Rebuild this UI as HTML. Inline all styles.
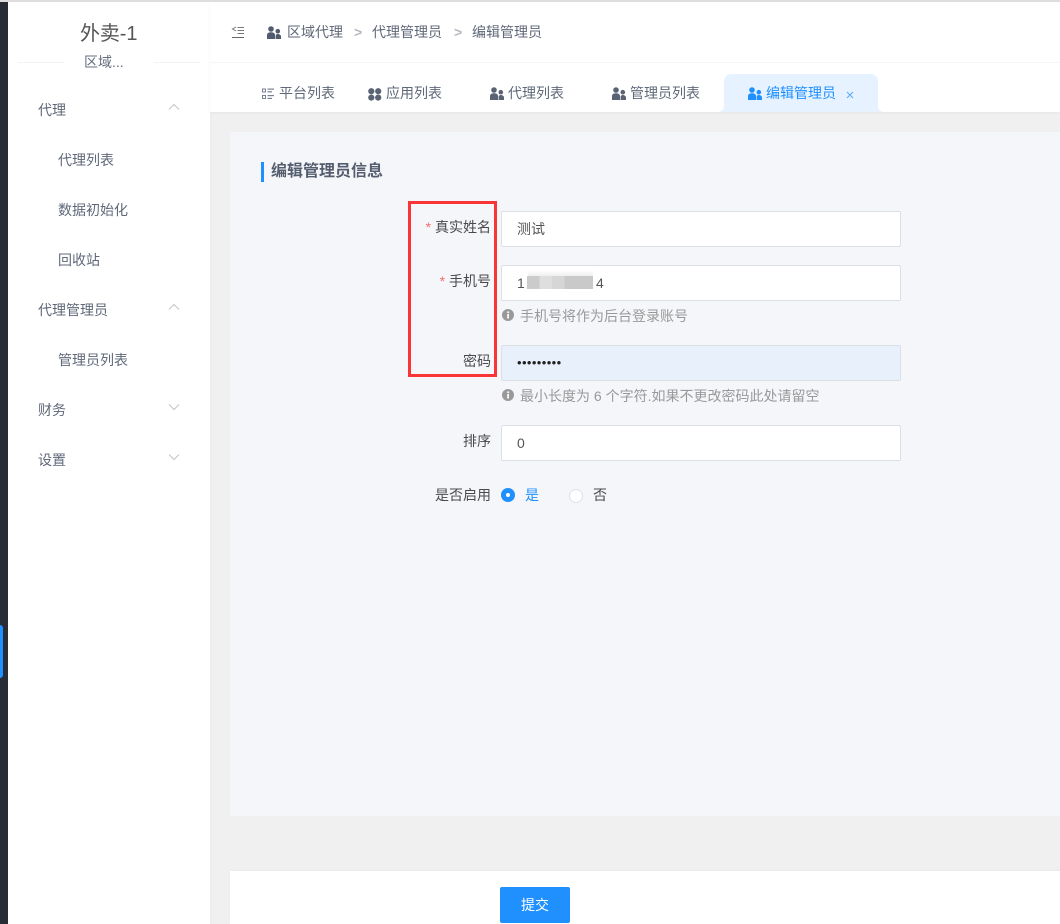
<!DOCTYPE html>
<html lang="zh">
<head>
<meta charset="utf-8">
<title>编辑管理员</title>
<style>
html,body{margin:0;padding:0;width:1060px;height:924px;overflow:hidden;background:#f0f0f0}
body{position:relative;font-family:"Liberation Sans","Noto Sans CJK SC",sans-serif;font-size:14px;color:#515a6e}
.a{position:absolute;white-space:nowrap;line-height:20px}
.box{position:absolute;box-sizing:border-box}
.m{color:#5f6879}
.input{position:absolute;left:501px;width:400px;height:36px;box-sizing:border-box;background:#fff;border:1px solid #dcdfe6;border-radius:2px;color:#555;line-height:34px;padding-left:15px}
.lab{color:#4a4a4a;text-align:right;right:569px}
.hint{color:#999;left:520px}
.star{color:#f56c6c;font-family:"Liberation Sans",sans-serif}
svg{position:absolute;display:block}
</style>
</head>
<body>
<div class="box" style="left:0;top:0;width:1060px;height:2px;background:#dedede;z-index:5"></div>
<div class="box" style="left:0;top:1px;width:8px;height:923px;background:#282c35"></div>
<div class="box" style="left:0;top:625px;width:3px;height:53px;background:#2090ff;border-radius:0 3px 3px 0"></div>

<div class="box" style="left:8px;top:1px;width:202px;height:923px;background:#fff"></div>
<div class="box" style="left:210px;top:1px;width:3px;height:923px;background:linear-gradient(90deg,#ebebeb,#f0f0f0)"></div>
<div class="box" style="left:18px;top:62px;width:46px;height:1px;background:#f3f3f3"></div>
<div class="box" style="left:154px;top:62px;width:46px;height:1px;background:#f3f3f3"></div>
<div class="a" style="left:80px;top:21px;font-size:20px;line-height:26px;color:#555;letter-spacing:-.1px">外卖-1</div>
<div class="a" style="left:84px;top:52px;color:#666f80">区域...</div>

<div class="a m" style="left:38px;top:99px;margin-top:.6px">代理</div>
<svg style="left:168px;top:103px" width="12" height="8" viewBox="0 0 12 8"><path d="M1 6.5L6 1.5L11 6.5" fill="none" stroke="#c0c4cc" stroke-width="1"/></svg>
<div class="a m" style="left:58px;top:150px">代理列表</div>
<div class="a m" style="left:58px;top:200px">数据初始化</div>
<div class="a m" style="left:58px;top:250px">回收站</div>
<div class="a m" style="left:38px;top:300px">代理管理员</div>
<svg style="left:168px;top:303px" width="12" height="8" viewBox="0 0 12 8"><path d="M1 6.5L6 1.5L11 6.5" fill="none" stroke="#c0c4cc" stroke-width="1"/></svg>
<div class="a m" style="left:58px;top:350px">管理员列表</div>
<div class="a m" style="left:38px;top:400px">财务</div>
<svg style="left:168px;top:403px" width="12" height="8" viewBox="0 0 12 8"><path d="M1 1.5L6 6.5L11 1.5" fill="none" stroke="#c0c4cc" stroke-width="1"/></svg>
<div class="a m" style="left:38px;top:450px">设置</div>
<svg style="left:168px;top:453px" width="12" height="8" viewBox="0 0 12 8"><path d="M1 1.5L6 6.5L11 1.5" fill="none" stroke="#c0c4cc" stroke-width="1"/></svg>

<div class="box" style="left:210px;top:1px;width:850px;height:111px;background:#fff;box-shadow:0 1px 3px rgba(0,0,0,.05)"></div>
<div class="box" style="left:210px;top:62px;width:850px;height:1px;background:#f5f5f5"></div>

<svg style="left:231px;top:26px" width="14" height="12" viewBox="0 0 14 12"><path d="M5 1L1.5 3L5 5M6.5 1.5H13M6.5 4.5H13M6.5 7.5H13" fill="none" stroke="#777" stroke-width="1"/><path d="M1 11.5H13" stroke="#666" stroke-width="1"/></svg>

<svg style="left:267px;top:26px" width="14" height="13" viewBox="0 0 14 13"><g fill="#515a6e"><circle cx="4" cy="3" r="2.8"/><path d="M0 13V9C0 7 2 6.2 4 6.2S8 7 8 9V13Z"/><circle cx="10.8" cy="5.2" r="2.3"/><path d="M8.6 13V10C8.6 8.8 9.6 8 10.8 8S14 8.8 14 10.5V13Z"/></g></svg>
<div class="a" style="left:287px;top:22px;color:#5f6879">区域代理</div>
<div class="a" style="left:354px;top:22px;color:#b4b8c0;font-family:'Liberation Sans',sans-serif;font-weight:700">&gt;</div>
<div class="a" style="left:372px;top:22px;color:#5f6879">代理管理员</div>
<div class="a" style="left:454px;top:22px;color:#b4b8c0;font-family:'Liberation Sans',sans-serif;font-weight:700">&gt;</div>
<div class="a" style="left:472px;top:22px;color:#5f6879">编辑管理员</div>

<svg style="left:262px;top:88px" width="12" height="12" viewBox="0 0 12 12"><g fill="#7a8291"><path d="M0 0.5H4V4.5H0ZM1 1.5V3.5H3V1.5Z" fill-rule="evenodd"/><rect x="5.5" y="0.5" width="6.5" height="1.2"/><rect x="5.5" y="3.2" width="4.5" height="1.2"/><path d="M0 7H4V11H0ZM1 8V10H3V8Z" fill-rule="evenodd"/><rect x="5.5" y="7" width="6.5" height="1.2"/><rect x="5.5" y="9.8" width="4.5" height="1.2"/></g></svg>
<div class="a m" style="left:279px;top:83px">平台列表</div>

<svg style="left:368px;top:88px" width="14" height="13" viewBox="0 0 14 13"><g fill="#5a6373"><circle cx="3.3" cy="3.2" r="3.1"/><circle cx="10.2" cy="3.2" r="3.1"/><circle cx="3.3" cy="9.6" r="3.1"/><circle cx="10.2" cy="9.6" r="3.1"/></g></svg>
<div class="a m" style="left:386px;top:83px">应用列表</div>

<svg style="left:490px;top:87px" width="14" height="13" viewBox="0 0 14 13"><g fill="#5a6373"><circle cx="4" cy="3" r="2.8"/><path d="M0 13V9C0 7 2 6.2 4 6.2S8 7 8 9V13Z"/><circle cx="10.8" cy="5.2" r="2.3"/><path d="M8.6 13V10C8.6 8.8 9.6 8 10.8 8S14 8.8 14 10.5V13Z"/></g></svg>
<div class="a m" style="left:508px;top:83px">代理列表</div>

<svg style="left:612px;top:87px" width="14" height="13" viewBox="0 0 14 13"><g fill="#5a6373"><circle cx="4" cy="3" r="2.8"/><path d="M0 13V9C0 7 2 6.2 4 6.2S8 7 8 9V13Z"/><circle cx="10.8" cy="5.2" r="2.3"/><path d="M8.6 13V10C8.6 8.8 9.6 8 10.8 8S14 8.8 14 10.5V13Z"/></g></svg>
<div class="a m" style="left:630px;top:83px">管理员列表</div>

<svg style="left:717px;top:74px;z-index:1" width="168" height="38" viewBox="0 0 168 38"><path d="M0 38C4 38 7 36 7 32V8C7 3 10 0 15 0H153C158 0 161 3 161 8V32C161 36 164 38 168 38Z" fill="#e6f2ff"/></svg>
<svg style="left:748px;top:87px;z-index:2" width="14" height="13" viewBox="0 0 14 13"><g fill="#2090ff"><circle cx="4" cy="3" r="2.8"/><path d="M0 13V9C0 7 2 6.2 4 6.2S8 7 8 9V13Z"/><circle cx="10.8" cy="5.2" r="2.3"/><path d="M8.6 13V10C8.6 8.8 9.6 8 10.8 8S14 8.8 14 10.5V13Z"/></g></svg>
<div class="a" style="left:766px;top:83px;color:#2090ff;z-index:2">编辑管理员</div>
<svg style="left:846px;top:91px;z-index:2" width="8" height="8" viewBox="0 0 8 8"><path d="M1 1L7 7M7 1L1 7" stroke="#5aa9f5" stroke-width="1"/></svg>

<div class="box" style="left:230px;top:132px;width:830px;height:684px;background:#f5f6fa"></div>
<div class="box" style="left:261px;top:162px;width:3px;height:20px;background:#2090ff"></div>
<div class="a" style="left:271px;top:161px;font-size:16px;line-height:22px;font-weight:700;color:#555e6e">编辑管理员信息</div>

<div class="box" style="left:408px;top:201px;width:89px;height:176px;border:3px solid #f93535"></div>

<div class="a lab" style="top:217px"><span class="star">* </span>真实姓名</div>
<div class="input" style="top:211px">测试</div>

<div class="a lab" style="top:271px"><span class="star">* </span>手机号</div>
<div class="input" style="top:265px">1</div>
<div class="a" style="left:596px;top:273px;color:#555">4</div>
<div class="box" style="left:528px;top:270px;width:65px;height:7px;background:linear-gradient(180deg,#fff,#ececec)"></div>
<div class="box" style="left:527px;top:276px;width:66px;height:13px;background:linear-gradient(90deg,#cbcbcb 0,#cbcbcb 19%,#dedede 19%,#dedede 38%,#d6d6d6 38%,#d6d6d6 57%,#c9c9c9 57%,#c9c9c9 100%)"></div>

<svg style="left:502px;top:309px" width="12" height="12" viewBox="0 0 12 12"><circle cx="6" cy="6" r="6" fill="#999"/><rect x="5.2" y="5" width="1.7" height="4.5" fill="#fff"/><circle cx="6.2" cy="3.3" r="1" fill="#fff"/></svg>
<div class="a hint" style="top:306px">手机号将作为后台登录账号</div>

<div class="a lab" style="top:351px">密码</div>
<div class="input" style="top:345px;background:#e8f0fb;color:#222;font-size:13px;letter-spacing:.4px">•••••••••</div>

<svg style="left:502px;top:389px" width="12" height="12" viewBox="0 0 12 12"><circle cx="6" cy="6" r="6" fill="#999"/><rect x="5.2" y="5" width="1.7" height="4.5" fill="#fff"/><circle cx="6.2" cy="3.3" r="1" fill="#fff"/></svg>
<div class="a hint" style="top:386px">最小长度为 6 个字符.如果不更改密码此处请留空</div>

<div class="a lab" style="top:431px">排序</div>
<div class="input" style="top:425px">0</div>

<div class="a lab" style="top:485px">是否启用</div>
<div class="box" style="left:501px;top:488px;width:14px;height:14px;border-radius:50%;background:#2090ff"></div>
<div class="box" style="left:506px;top:493px;width:4px;height:4px;border-radius:50%;background:#fff"></div>
<div class="a" style="left:525px;top:485px;color:#2090ff">是</div>
<div class="box" style="left:569px;top:489px;width:14px;height:14px;border-radius:50%;background:#fff;border:1px solid #dcdfe6"></div>
<div class="a" style="left:593px;top:485px;color:#4a4a4a">否</div>

<div class="box" style="left:230px;top:871px;width:830px;height:53px;background:#fff;box-shadow:0 -1px 2px rgba(0,0,0,.03)"></div>
<div class="box" style="left:500px;top:887px;width:70px;height:36px;background:#2090ff;border-radius:2px;color:#fff;text-align:center;line-height:36px">提交</div>
</body>
</html>
